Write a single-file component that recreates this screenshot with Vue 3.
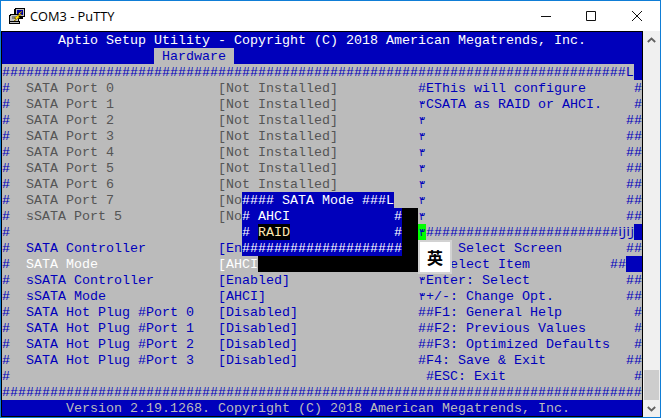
<script setup>
const H = '#'
const PORT = '\u0663'
const portRow = (label, value, help, right) => [
  [0, H], [3, label, 'dim'], [27, value, 'dim'], ...help, ...right
]
const one = [[79, H]]
const two = [[78, '##']]
const tick = [[52, PORT, 'mark']]
const hot = (n, help, right) => [[0, H], [3, `SATA Hot Plug #Port ${n}`], [27, '[Disabled]'], ...help, ...right]

const rows = [
  { tone: 'head', cells: [[7, 'Aptio Setup Utility - Copyright (C) 2018 American Megatrends, Inc.', 'bright']] },
  { tone: 'head', cells: [[19, ' Hardware ', 'tab']] },
  { cells: [[0, H.repeat(78) + 'L'], [79, ' ', 'fill']] },
  { cells: portRow('SATA Port 0', '[Not Installed]', [[52, '#EThis will configure']], one) },
  { cells: portRow('SATA Port 1', '[Not Installed]', [[52, PORT, 'mark'], [53, 'CSATA as RAID or AHCI.']], one) },
  { cells: portRow('SATA Port 2', '[Not Installed]', tick, two) },
  { cells: portRow('SATA Port 3', '[Not Installed]', tick, two) },
  { cells: portRow('SATA Port 4', '[Not Installed]', tick, two) },
  { cells: portRow('SATA Port 5', '[Not Installed]', tick, two) },
  { cells: portRow('SATA Port 6', '[Not Installed]', tick, two) },
  { cells: [[0, H], [3, 'SATA Port 7', 'dim'], [27, '[No', 'dim'], [30, '#### SATA Mode ###L', 'pop'], ...tick, ...two] },
  { cells: [[0, H], [3, 'sSATA Port 5', 'dim'], [27, '[No', 'dim'], [30, '# AHCI             #', 'pop'], [50, '  ', 'shade'], ...tick, ...two] },
  { cells: [[0, H], [30, '# ', 'pop'], [32, 'RAID', 'sel'], [36, '             #', 'pop'], [50, '  ', 'shade'], [52, PORT, 'green mark'], [53, H.repeat(24) + '\u0133\u0133'], [79, ' ', 'fill']] },
  { cells: [[0, H], [3, 'SATA Controller'], [27, '[En'], [30, H.repeat(20), 'pop'], [50, '  ', 'shade'], [57, 'Select Screen'], ...two] },
  { cells: [[0, H], [3, 'SATA Mode', 'bright'], [27, '[AHCI', 'bright'], [32, ' '.repeat(20), 'shade'], [56, 'elect Item'], [76, '##'], [78, '  ', 'fill']] },
  { cells: [[0, H], [3, 'sSATA Controller'], [27, '[Enabled]'], ...tick, [53, 'Enter: Select'], ...two] },
  { cells: [[0, H], [3, 'sSATA Mode'], [27, '[AHCI]'], ...tick, [53, '+/-: Change Opt.'], ...two] },
  { cells: hot(0, [[52, '##F1: General Help']], one) },
  { cells: hot(1, [[52, '##F2: Previous Values']], one) },
  { cells: hot(2, [[52, '##F3: Optimized Defaults']], one) },
  { cells: hot(3, [[52, '#F4: Save & Exit']], two) },
  { cells: [[0, H], [53, '#ESC: Exit'], ...one] },
  { cells: [[0, H.repeat(80)]] },
  { tone: 'head', cells: [[8, 'Version 2.19.1268. Copyright (C) 2018 American Megatrends, Inc.']] }
]

const place = (col, text) => ({ gridColumn: `${col + 1} / span ${text.length}` })
</script>

<template>
  <div class="window">
    <header class="titlebar">
      <svg class="app-icon" width="16" height="16" viewBox="0 0 16 16" shape-rendering="crispEdges">
        <path fill="#000" d="M6 0h10v9h-2v2H6V9H5V1h1z" />
        <path fill="#c0c0c0" d="M7 1h8v7H7z" />
        <path fill="#0000a8" d="M8 2h6v5H8z" />
        <path fill="#000" d="M1 6h9v8H0V7h1z" />
        <path fill="#c0c0c0" d="M2 7h7v6H1V8h1z" />
        <path fill="#808080" d="M3 8h5v3H3z" />
        <path fill="#000" d="M0 13h11v3H0z" />
        <path fill="#c0c0c0" d="M1 14h9v1H1z" />
        <path fill="#ffe000" stroke="#7a6000" stroke-width=".5" d="M13 3l-4 3h2L5 10l2 0-2 3 6-4H9l4-3h-2z" />
      </svg>
      <span class="title">COM3 - PuTTY</span>
      <div class="controls">
        <button class="control minimize"><svg width="10" height="10" viewBox="0 0 10 10"><path d="M0 5.500h10" stroke="#111" /></svg></button>
        <button class="control"><svg width="10" height="10" viewBox="0 0 10 10"><path d="M.5.5h9v9h-9z" fill="none" stroke="#111" /></svg></button>
        <button class="control"><svg width="10" height="10" viewBox="0 0 10 10"><path d="M0 0l10 10M10 0L0 10" stroke="#111" fill="none" /></svg></button>
      </div>
    </header>
    <div class="body">
      <main class="terminal">
        <div v-for="(row, i) in rows" :key="i" class="row" :class="row.tone">
          <span
            v-for="(cell, j) in row.cells"
            :key="j"
            class="cell"
            :class="cell[2]"
            :style="place(cell[0], cell[1])"
          >{{ cell[1] }}</span>
        </div>
        <div class="ime">英</div>
      </main>
      <aside class="scrollbar">
        <div class="arrow"><svg width="9" height="6" viewBox="0 0 9 6"><path d="M.8 5L4.500 1.500 8.200 5" fill="none" stroke="#606060" stroke-width="1.800" /></svg></div>
        <div class="track"></div>
        <div class="thumb"></div>
        <div class="arrow"><svg width="9" height="6" viewBox="0 0 9 6"><path d="M.8 1L4.500 4.500 8.200 1" fill="none" stroke="#606060" stroke-width="1.800" /></svg></div>
      </aside>
    </div>
  </div>
</template>

<style scoped>
.window {
  width: 661px;
  height: 418px;
  box-sizing: border-box;
  border: 1px solid #0f7dd6;
  background: #fff;
  display: flex;
  flex-direction: column;
  overflow: hidden;
}
.titlebar {
  height: 30px;
  flex: none;
  display: flex;
  align-items: center;
  padding-left: 8px;
}
.app-icon {
  flex: none;
}
.title {
  margin-left: 5px;
  font: 12.8px/30px "Open Sans", sans-serif;
  color: #000;
}
.controls {
  margin-left: auto;
  display: flex;
}
.control {
  width: 46px;
  height: 30px;
  padding: 0;
  border: 0;
  background: none;
  display: flex;
  align-items: center;
  justify-content: center;
}
.control.minimize {
  width: 44px;
}
.body {
  flex: 1;
  display: flex;
  min-height: 0;
}
.terminal {
  position: relative;
  width: 640px;
  height: 384px;
  flex: none;
  border: 1px solid #000;
  background: #bbb;
}
.row {
  display: grid;
  grid-template-columns: repeat(80, 8px);
  height: 16px;
  background: #bbb;
  color: #00b;
  font: 13.333px/18px "Liberation Mono", monospace;
  white-space: pre;
}
.row.head {
  background: #00b;
  color: #bbb;
}
.cell {
  grid-row: 1;
  height: 16px;
}
.mark {
  font-size: 11px;
  text-align: center;
}
.dim {
  color: #555;
}
.bright {
  color: #fff;
}
.tab {
  background: #bbb;
  color: #00b;
}
.fill {
  background: #00b;
}
.pop {
  background: #00b;
  color: #fff;
}
.sel {
  background: #000;
  color: #ffe9b0;
}
.shade {
  background: #000;
}
.green {
  background: #0f0;
  color: #00b;
}
.ime {
  position: absolute;
  left: 416px;
  top: 208px;
  width: 30px;
  height: 30px;
  border: 2px solid #d2d2d2;
  background: #fff;
  color: #000;
  font: 700 16px/30px "Noto Sans CJK SC", sans-serif;
  text-align: center;
}
.scrollbar {
  flex: 1;
  background: #f0f0f0;
  display: flex;
  flex-direction: column;
}
.arrow {
  height: 17px;
  flex: none;
  display: flex;
  align-items: center;
  justify-content: center;
}
.track {
  flex: 1;
}
.thumb {
  height: 30px;
  flex: none;
  margin: 0 1px;
  background: #cdcdcd;
}
</style>
